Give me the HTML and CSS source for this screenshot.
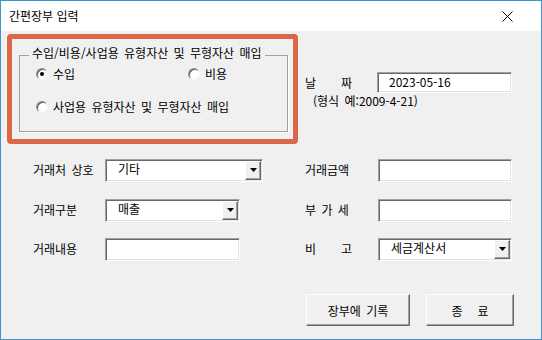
FILE: index.html
```html
<!DOCTYPE html>
<html lang="ko">
<head>
    <meta charset="UTF-8" />
    <title>간편장부 입력</title>
    <link rel="stylesheet" href="styles.css">
</head>
<body>
    <div class="window">
        <!-- Title bar -->
        <div class="titlebar">
            <span class="title">간편장부 입력</span>
            <svg class="close" width="11" height="11" viewBox="0 0 11 11">
                <path d="M0.5 0.5L10.5 10.5M10.5 0.5L0.5 10.5" stroke="#000" stroke-width="1" fill="none" />
            </svg>
        </div>

        <div class="client">
            <!-- Type + date -->
            <div class="top">
                <div class="highlight">
                    <fieldset class="group">
                        <legend>수입/비용/사업용 유형자산 및 무형자산 매입</legend>
                        <div class="radios">
                            <label class="radio-item"><span class="radio checked"></span>수입</label>
                            <label class="radio-item"><span class="radio"></span>비용</label>
                            <label class="radio-item wide"><span class="radio"></span>사업용 유형자산 및 무형자산 매입</label>
                        </div>
                    </fieldset>
                </div>
                <div class="date-block">
                    <div class="date-row">
                        <span class="label spread date-label"><span>날</span><span>짜</span></span>
                        <div class="field date">2023-05-16</div>
                    </div>
                    <div class="hint">(형식 예:2009-4-21)</div>
                </div>
            </div>

            <!-- Entry fields -->
            <div class="form">
                <div class="col col-left">
                    <span class="label">거래처 상호</span>
                    <div class="field combo w158">
                        <span class="combo-text">기타</span>
                        <span class="drop"><svg width="7" height="4" viewBox="0 0 7 4"><polygon points="0,0 7,0 3.5,4" fill="#000" /></svg></span>
                    </div>
                    <span class="label">거래구분</span>
                    <div class="field combo w135">
                        <span class="combo-text">매출</span>
                        <span class="drop"><svg width="7" height="4" viewBox="0 0 7 4"><polygon points="0,0 7,0 3.5,4" fill="#000" /></svg></span>
                    </div>
                    <span class="label">거래내용</span>
                    <div class="field w135"></div>
                </div>
                <div class="col col-right">
                    <span class="label">거래금액</span>
                    <div class="field w134"></div>
                    <span class="label">부 가 세</span>
                    <div class="field w134"></div>
                    <span class="label spread"><span>비</span><span>고</span></span>
                    <div class="field combo w134">
                        <span class="combo-text">세금계산서</span>
                        <span class="drop"><svg width="7" height="4" viewBox="0 0 7 4"><polygon points="0,0 7,0 3.5,4" fill="#000" /></svg></span>
                    </div>
                </div>
            </div>

            <!-- Buttons -->
            <div class="actions">
                <button class="btn btn-save">장부에 기록</button>
                <button class="btn btn-quit"><span>종</span><span>료</span></button>
            </div>
        </div>
    </div>
</body>
</html>
```

FILE: styles.css
```css
body {
    margin: 0;
    font-family: "Noto Sans CJK KR", "Liberation Sans", sans-serif;
    font-size: 12px;
    color: #000;
    background-color: #f0f0f0;
}
.window {
    width: 542px;
    height: 340px;
    box-sizing: border-box;
    border: 1px solid #3d94cf;
    display: flex;
    flex-direction: column;
}
/* Title bar */
.titlebar {
    height: 30px;
    background-color: #fff;
    display: flex;
    align-items: center;
    justify-content: space-between;
    padding: 0 28px 0 8px;
}
.title {
    font-size: 12px;
    line-height: 16px;
}
.close {
    display: block;
}
/* End */
.client {
    flex: 1;
    background-color: #f0f0f0;
    line-height: 16px;
    word-spacing: 2px;
}
.top {
    display: flex;
    padding: 3px 0 0 6px;
}
.highlight {
    width: 291px;
    box-sizing: border-box;
    border: 5px solid #da6848;
    border-radius: 4px;
    padding: 7px 5px 7px 7px;
}
.group {
    margin: 0;
    min-width: 0;
    border: 1px solid #a0a0a0;
    box-shadow: 1px 1px 0 #fff;
    padding: 0 0 14px 16px;
}
.group legend {
    margin-left: -7px;
    padding: 0 3px 4px;
    line-height: 14px;
}
.radios {
    display: grid;
    grid-template-columns: 152px 1fr;
    grid-auto-rows: 20px;
    row-gap: 13px;
}
.radio-item {
    display: flex;
    align-items: center;
    gap: 5px;
}
.radio-item.wide {
    grid-column: 1 / -1;
}
.radio {
    width: 12px;
    height: 12px;
    box-sizing: border-box;
    border-radius: 50%;
    background-color: #fff;
    border: 1px solid;
    border-color: #8a8a8a #f4f4f4 #f4f4f4 #8a8a8a;
    box-shadow: inset 1px 1px 0 #5a5a5a;
    display: flex;
    align-items: center;
    justify-content: center;
}
.radio.checked::after {
    content: "";
    width: 4px;
    height: 4px;
    border-radius: 50%;
    background-color: #000;
}
/* Date */
.date-block {
    margin: 38px 0 0 7px;
}
.date-row {
    display: flex;
    align-items: center;
}
.label {
    white-space: nowrap;
}
.spread {
    display: flex;
    gap: 25px;
}
.date-label {
    width: 72px;
}
.field {
    box-sizing: border-box;
    height: 23px;
    background-color: #fff;
    border: 1px solid;
    border-color: #a0a0a0 #fff #fff #a0a0a0;
    box-shadow: inset 1px 1px 0 #696969, inset -1px -1px 0 #e3e3e3;
    display: flex;
    align-items: center;
}
.field.date {
    width: 135px;
    height: 21px;
    padding: 0 0 2px 11px;
}
.hint {
    margin: 1px 0 0 8px;
    line-height: 14px;
}
/* Form */
.form {
    display: flex;
    gap: 42px;
    margin: 6px 0 0 32px;
}
.col {
    display: grid;
    grid-template-rows: 40px 40px 38px;
    align-items: center;
}
.col-left {
    grid-template-columns: 72px 158px;
}
.col-right {
    grid-template-columns: 73px 134px;
}
.w158 { width: 158px; }
.w135 { width: 135px; }
.w134 { width: 134px; }
.combo {
    padding: 1px;
}
.combo-text {
    flex: 1;
    padding: 0 0 2px 11px;
}
.drop {
    align-self: stretch;
    width: 16px;
    box-sizing: border-box;
    background-color: #f0f0f0;
    border: 1px solid;
    border-color: #fff #696969 #696969 #fff;
    box-shadow: inset -1px -1px 0 #a0a0a0;
    display: flex;
    align-items: center;
    justify-content: center;
}
.drop svg {
    display: block;
}
/* Buttons */
.actions {
    display: flex;
    justify-content: flex-end;
    gap: 16px;
    margin-top: 26px;
    padding-right: 27px;
}
.btn {
    height: 32px;
    font-family: inherit;
    font-size: 12px;
    word-spacing: 2px;
    color: #000;
    background-color: #f0f0f0;
    border: 1px solid;
    border-color: #fff #696969 #696969 #fff;
    box-shadow: inset -1px -1px 0 #a0a0a0;
    padding: 0;
    display: flex;
    align-items: center;
    justify-content: center;
}
.btn-save {
    width: 104px;
}
.btn-quit {
    width: 88px;
    gap: 15px;
}
```
